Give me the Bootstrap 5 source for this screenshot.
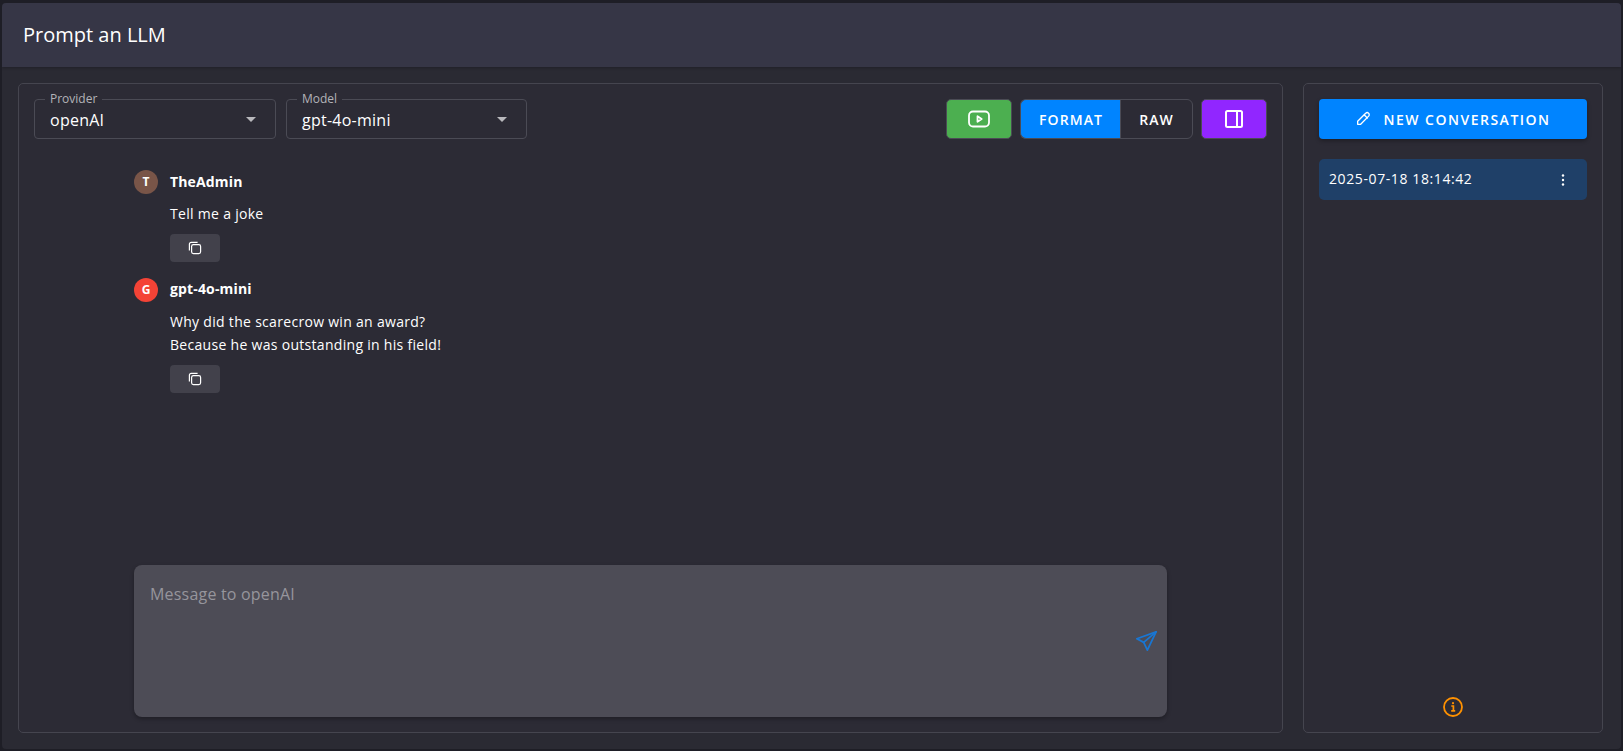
<!DOCTYPE html>
<html lang="en">
<head>
<meta charset="utf-8">
<title>Prompt an LLM</title>
<link rel="stylesheet" href="https://cdn.jsdelivr.net/npm/bootstrap@5.3.0/dist/css/bootstrap.min.css">
<style>
html,body{height:100%;}
body{background:#1e1e26;color:#fff;font-family:"Open Sans","Noto Sans",sans-serif;font-size:14px;overflow:hidden;padding:3px 2px;}
.shell{height:746px;background:#2a2a33;border-radius:4px;overflow:hidden;}
.topbar{height:64px;background:#363646;padding-left:21px;font-size:20px;font-weight:400;box-shadow:0 1px 3px rgba(0,0,0,.25);}
.workarea{padding:16px 18px 16px 16px;gap:20px;min-height:0;}
.panel{background:#2c2b35;border:1px solid #45454f;border-radius:5px;padding:15px;min-height:0;}
.panel-right{width:300px;flex:none;}
.selects{gap:10px;}
.outlined{position:relative;width:242px;height:40px;border:1px solid #4b4b55;border-radius:4px;padding:0 19px 0 15px;}
.outlined-model{width:241px;}
.outlined-label{position:absolute;left:10px;top:-8px;padding:0 5px;background:#2c2b35;font-size:12px;line-height:14px;color:#b3b3b8;}
.outlined-value{font-size:16px;letter-spacing:.25px;padding-top:2px;}
.caret-down{width:0;height:0;border-left:5px solid transparent;border-right:5px solid transparent;border-top:5px solid #b9b9bd;}
.tool-btn{height:40px;width:66px;padding:0;border-radius:5px;border:1px solid #4b4b55;color:#fff;}
.tool-green,.tool-green:hover{background:#4caf50;color:#fff;border-color:#4b4b55;}
.tool-purple,.tool-purple:hover{background:#9126ff;color:#fff;border-color:#4b4b55;}
.fmt-group{height:40px;}
.fmt-btn{height:40px;padding:0;font-size:14px;font-weight:600;letter-spacing:1.1px;color:#fff;border:1px solid #4b4b55;}
.fmt-on,.fmt-on:hover{width:101px;background:#0084ff;color:#fff;border-color:#4b4b55;border-right:0;}
.fmt-off,.fmt-off:hover{width:73px;background:transparent;color:#fff;}
.chat-col{width:1033px;margin:31px auto 0;min-height:0;}
.avatar-dot{width:24px;height:24px;border-radius:50%;font-size:12px;font-weight:700;flex:none;}
.av-brown{background:#795548;}
.av-red{background:#f44336;}
.msg-head{height:24px;gap:12px;font-size:14px;font-weight:700;}
.msg-name{margin-top:-2px;letter-spacing:.15px;}
.msg-body{margin:8px 0 8px 36px;font-size:14px;line-height:23.5px;letter-spacing:.3px;}
.copy-btn{width:50px;height:28px;padding:0;background:#42414b;border:0;border-radius:4px;color:#fff;margin-left:36px;margin-bottom:16px;}
.copy-btn:hover{background:#42414b;color:#fff;}
.composer{position:relative;height:152px;}
.composer-input{width:100%;height:100%;resize:none;background:#4d4c56;border:0;border-radius:8px;color:#fff;padding:17px 16px;font-size:16px;letter-spacing:.2px;box-shadow:0 2px 4px rgba(0,0,0,.3);}
.composer-input:focus{background:#4d4c56;color:#fff;box-shadow:0 2px 4px rgba(0,0,0,.3);}
.composer-input::placeholder{color:#96959c;opacity:1;}
.send-btn{position:absolute;right:10px;top:65px;width:22px;height:22px;line-height:0;color:#1976d2;}
.new-btn,.new-btn:hover{height:40px;background:#0084ff;color:#fff;border:0;border-radius:4px;font-size:14px;font-weight:600;letter-spacing:1.5px;gap:12px;box-shadow:0 2px 4px rgba(0,0,0,.3);}
.conv-item{height:41px;margin-top:20px;background:#1f4068;border-radius:5px;padding:0 10px;font-size:14px;}
.conv-date{margin-top:-2px;letter-spacing:.6px;}
.kebab{margin-right:6px;}
.info-mark{color:#ff9100;line-height:0;margin-bottom:-1px;}
</style>
</head>
<body>
<div class="shell d-flex flex-column">
  <header class="topbar d-flex align-items-center">Prompt an LLM</header>
  <main class="workarea d-flex flex-grow-1">
    <section class="panel d-flex flex-column flex-grow-1">
      <div class="d-flex align-items-center justify-content-between">
        <div class="selects d-flex">
          <div class="outlined d-flex align-items-center justify-content-between">
            <span class="outlined-label">Provider</span>
            <span class="outlined-value">openAI</span>
            <span class="caret-down"></span>
          </div>
          <div class="outlined outlined-model d-flex align-items-center justify-content-between">
            <span class="outlined-label">Model</span>
            <span class="outlined-value">gpt-4o-mini</span>
            <span class="caret-down"></span>
          </div>
        </div>
        <div class="d-flex gap-2">
          <button class="btn tool-btn tool-green d-flex align-items-center justify-content-center" aria-label="Run">
            <svg width="24" height="24" viewBox="0 0 24 24" fill="none" stroke="currentColor" stroke-width="1.8" stroke-linejoin="round"><rect x="2" y="4.5" width="20" height="15" rx="4"/><path d="M10.5 9.2l4.2 2.8-4.2 2.8z"/></svg>
          </button>
          <div class="btn-group fmt-group">
            <button class="btn fmt-btn fmt-on">FORMAT</button>
            <button class="btn fmt-btn fmt-off">RAW</button>
          </div>
          <button class="btn tool-btn tool-purple d-flex align-items-center justify-content-center" aria-label="Toggle sidebar">
            <svg width="24" height="24" viewBox="0 0 24 24" fill="none" stroke="currentColor" stroke-width="2" stroke-linejoin="round"><rect x="4" y="4" width="16" height="16" rx="1.5"/><path d="M15 4v16"/></svg>
          </button>
        </div>
      </div>
      <div class="chat-col d-flex flex-column flex-grow-1">
        <div class="flex-grow-1">
          <div class="msg-head d-flex align-items-center">
            <span class="avatar-dot av-brown d-flex align-items-center justify-content-center">T</span>
            <span class="msg-name">TheAdmin</span>
          </div>
          <div class="msg-body">Tell me a joke</div>
          <button class="btn copy-btn d-flex align-items-center justify-content-center" aria-label="Copy">
            <svg width="14" height="14" viewBox="0 0 14 14" fill="none" stroke="currentColor" stroke-width="1.2" stroke-linejoin="round"><rect x="3.6" y="3.6" width="9" height="9" rx="1.8"/><path d="M1.4 9.6V3.2c0-1 .8-1.8 1.8-1.8h6.4"/></svg>
          </button>
          <div class="msg-head d-flex align-items-center">
            <span class="avatar-dot av-red d-flex align-items-center justify-content-center">G</span>
            <span class="msg-name">gpt-4o-mini</span>
          </div>
          <div class="msg-body">Why did the scarecrow win an award?<br>Because he was outstanding in his field!</div>
          <button class="btn copy-btn d-flex align-items-center justify-content-center" aria-label="Copy">
            <svg width="14" height="14" viewBox="0 0 14 14" fill="none" stroke="currentColor" stroke-width="1.2" stroke-linejoin="round"><rect x="3.6" y="3.6" width="9" height="9" rx="1.8"/><path d="M1.4 9.6V3.2c0-1 .8-1.8 1.8-1.8h6.4"/></svg>
          </button>
        </div>
        <div class="composer">
          <textarea class="form-control composer-input" placeholder="Message to openAI"></textarea>
          <span class="send-btn">
            <svg width="22" height="22" viewBox="0 0 24 24" fill="none" stroke="currentColor" stroke-width="1.9" stroke-linejoin="round" stroke-linecap="round"><path d="M23 2 2 9.5l7.5 4L13.5 22z"/><path d="M23 2 9.5 13.5"/></svg>
          </span>
        </div>
      </div>
    </section>
    <aside class="panel panel-right d-flex flex-column">
      <button class="btn new-btn d-flex align-items-center justify-content-center w-100">
        <svg width="16" height="16" viewBox="0 0 24 24" fill="none" stroke="currentColor" stroke-width="2" stroke-linejoin="round" stroke-linecap="round"><path d="M4 20v-4.500L16 3.500a3 3 0 0 1 4.500 4.200L8.500 20z"/><path d="M14 6l4.500 4.500"/></svg>
        <span>NEW CONVERSATION</span>
      </button>
      <div class="conv-item d-flex align-items-center justify-content-between">
        <span class="conv-date">2025-07-18 18:14:42</span>
        <svg class="kebab" width="16" height="16" viewBox="0 0 16 16" fill="#fff"><circle cx="8" cy="3.500" r="1.200"/><circle cx="8" cy="8" r="1.200"/><circle cx="8" cy="12.500" r="1.200"/></svg>
      </div>
      <div class="info-mark mt-auto text-center">
        <svg width="22" height="22" viewBox="0 0 22 22" fill="none" stroke="currentColor"><circle cx="11" cy="11" r="9" stroke-width="1.800"/><path d="M9.300 10h2.100v4.600M9.200 14.800h4" stroke-width="1.700"/><circle cx="11" cy="7.200" r="1.100" fill="currentColor" stroke="none"/></svg>
      </div>
    </aside>
  </main>
</div>
<script src="https://cdn.jsdelivr.net/npm/bootstrap@5.3.0/dist/js/bootstrap.bundle.min.js"></script>
</body>
</html>
